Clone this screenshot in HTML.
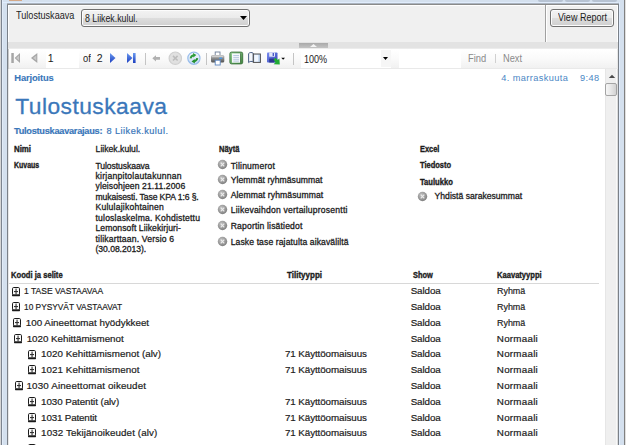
<!DOCTYPE html>
<html><head><meta charset="utf-8"><title>Tulostuskaava</title><style>
html,body{margin:0;padding:0;}
body{width:626px;height:445px;overflow:hidden;background:#d4e0ee;position:relative;font-family:"Liberation Sans",sans-serif;}
.a{position:absolute;display:block;}
.t{position:absolute;white-space:pre;color:#1c1c1c;font-family:"Liberation Sans",sans-serif;}
</style></head><body>
<div class="a" style="left:0px;top:0px;width:1px;height:445px;background:#d6d6d6"></div>
<div class="a" style="left:1px;top:0px;width:1px;height:445px;background:#7c8490"></div>
<div class="a" style="left:2px;top:0px;width:1px;height:445px;background:#e2ecf8"></div>
<div class="a" style="left:7px;top:4px;width:1px;height:441px;background:#7a8088"></div>
<div class="a" style="left:2px;top:2px;width:616px;height:1px;background:#e0ecfc"></div>
<div class="a" style="left:7px;top:3px;width:612px;height:1px;background:#aab3be"></div>
<div class="a" style="left:7px;top:4px;width:612px;height:1px;background:#8a8a8a"></div>
<div class="a" style="left:618px;top:4px;width:1px;height:441px;background:#7a8088"></div>
<div class="a" style="left:619px;top:2px;width:1px;height:443px;background:#e0ecfc"></div>
<div class="a" style="left:624px;top:0px;width:1px;height:445px;background:#808080"></div>
<div class="a" style="left:625px;top:0px;width:1px;height:445px;background:#e0e0e0"></div>
<div class="a" style="left:9px;top:0px;width:13px;height:1px;background:#d4a888"></div>
<div class="a" style="left:538px;top:0px;width:25px;height:2px;background:#b7c3d3;border-radius:0 0 3px 3px"></div>
<div class="a" style="left:565px;top:0px;width:25px;height:2px;background:#b7c3d3;border-radius:0 0 3px 3px"></div>
<div class="a" style="left:592px;top:0px;width:25px;height:2px;background:#b7c3d3;border-radius:0 0 3px 3px"></div>
<div class="a" style="left:8px;top:5px;width:610px;height:37px;background:#f0f0f0"></div>
<div class="a" style="left:8px;top:5px;width:610px;height:1px;background:#ffffff"></div>
<div class="a" style="left:8px;top:5px;width:1px;height:37px;background:#ffffff"></div>
<div class="a" style="left:617px;top:5px;width:1px;height:37px;background:#ffffff"></div>
<div class="a" style="left:545px;top:5px;width:1px;height:37px;background:#a0a0a0"></div>
<div class="a" style="left:546px;top:5px;width:1px;height:37px;background:#ffffff"></div>
<div class="a" style="left:81px;top:9px;width:169px;height:18px;box-sizing:border-box;border:1px solid #707070;border-radius:3px;background:linear-gradient(#f3f3f3,#ebebeb 48%,#dddddd 52%,#cfcfcf);box-shadow:inset 0 0 0 1px #fcfcfc"></div>
<svg class="a" style="left:240px;top:16px" width="7" height="4"><path d="M0 0H7L3.5 4Z" fill="#000"/></svg>
<div class="a" style="left:550px;top:9px;width:64px;height:18px;box-sizing:border-box;border:1px solid #707070;border-radius:3px;background:linear-gradient(#f3f3f3,#ebebeb 48%,#dddddd 52%,#cfcfcf);box-shadow:inset 0 0 0 1px #fcfcfc"></div>
<div class="a" style="left:8px;top:42px;width:610px;height:6px;background:#e3e3e3"></div>
<div class="a" style="left:8px;top:48px;width:610px;height:1px;background:#ececec"></div>
<div class="a" style="left:299px;top:43px;width:29px;height:5px;background:linear-gradient(#a9a9a9,#c4c4c4)"></div>
<svg class="a" style="left:310px;top:44px" width="7" height="3"><path d="M0 3H7L3.5 0Z" fill="#f4f4f4"/></svg>
<div class="a" style="left:8px;top:49px;width:610px;height:19px;background:linear-gradient(#ffffff,#fafafa 50%,#f1f1f1)"></div>
<div class="a" style="left:8px;top:68px;width:610px;height:1px;background:#e9e9e9"></div>
<div class="a" style="left:8px;top:49px;width:1px;height:20px;background:#c8c8c8"></div>
<div class="a" style="left:617px;top:49px;width:1px;height:20px;background:#e8e8e8"></div>
<div class="a" style="left:46px;top:50px;width:33px;height:18px;background:#ffffff"></div>
<div class="a" style="left:301px;top:50px;width:90px;height:18px;background:#ffffff"></div>
<div class="a" style="left:381px;top:50px;width:10px;height:17px;background:#f6f6f6"></div>
<svg class="a" style="left:383px;top:57px" width="5" height="3"><path d="M0 0H5L2.5 3Z" fill="#000"/></svg>
<div class="a" style="left:399px;top:50px;width:62px;height:18px;background:#ffffff"></div>
<div class="a" style="left:145px;top:53px;width:1px;height:12px;background:#c4c4c4"></div>
<div class="a" style="left:206px;top:53px;width:1px;height:12px;background:#c4c4c4"></div>
<div class="a" style="left:293px;top:53px;width:1px;height:12px;background:#c4c4c4"></div>
<div class="a" style="left:495px;top:54px;width:1px;height:9px;background:#d0d0d0"></div>
<svg class="a" style="left:9px;top:51px" width="30" height="14">
<rect x="2.3" y="2" width="2.5" height="10" fill="#a6a6a6"/>
<path d="M11 2V12L5.6 7Z" fill="#a6a6a6"/><path d="M10 4.5V9.5L7 7Z" fill="#c8c8c8"/>
<path d="M28.3 2V12L22 7Z" fill="#a6a6a6"/><path d="M27.3 4.5V9.5L24 7Z" fill="#c8c8c8"/>
</svg>
<svg class="a" style="left:108px;top:51px" width="30" height="14">
<defs><linearGradient id="bl" x1="0" y1="0" x2="0" y2="1"><stop offset="0" stop-color="#6a9af0"/><stop offset="1" stop-color="#1d3fc0"/></linearGradient></defs>
<path d="M2 2V12L7.5 7Z" fill="url(#bl)"/>
<path d="M19 2V12L24.5 7Z" fill="url(#bl)"/>
<rect x="25" y="2" width="2.6" height="10" fill="url(#bl)"/>
</svg>
<svg class="a" style="left:151px;top:54px" width="11" height="9">
<path d="M1.3 4.3L5 1.2V3H9V5.8H5V7.6Z" fill="#b0b0b0"/>
</svg>
<svg class="a" style="left:168px;top:51px" width="15" height="15">
<circle cx="7.3" cy="7.2" r="6.2" fill="#e0e0e0" stroke="#d0d0d0" stroke-width="1.2"/>
<path d="M5 4.9L9.6 9.5M9.6 4.9L5 9.5" stroke="#bcbcbc" stroke-width="1.5"/>
</svg>
<svg class="a" style="left:185px;top:50px" width="18" height="17">
<defs><linearGradient id="rf" x1="0" y1="0" x2="0" y2="1"><stop offset="0" stop-color="#f6f9fe"/><stop offset="1" stop-color="#c2d8f4"/></linearGradient></defs>
<circle cx="8.9" cy="8.2" r="6.1" fill="url(#rf)" stroke="#98bdec" stroke-width="1.2"/>
<path d="M5.6 8.3C5.9 6.6 7 5.5 8.8 5.2" stroke="#2c9c3a" stroke-width="1.9" fill="none"/>
<path d="M8 3L11.4 5.1L8.3 7.6Z" fill="#2c9c3a"/>
<path d="M12.3 8.2C12 9.9 10.9 11 9.1 11.3" stroke="#23902f" stroke-width="1.9" fill="none"/>
<path d="M9.9 13.5L6.5 11.4L9.6 8.9Z" fill="#23902f"/>
</svg>
<svg class="a" style="left:210px;top:51px" width="16" height="15">
<defs><linearGradient id="pr" x1="0" y1="0" x2="0" y2="1"><stop offset="0" stop-color="#c4c4c4"/><stop offset="0.45" stop-color="#8c8c8c"/><stop offset="1" stop-color="#505050"/></linearGradient></defs>
<rect x="5.2" y="1" width="4.8" height="4" fill="#fff" stroke="#6f7f98" stroke-width="0.9"/>
<rect x="1" y="4" width="13.3" height="7.6" rx="1.6" fill="url(#pr)"/>
<rect x="2" y="4.8" width="11.3" height="1.4" fill="#dcdcdc" opacity="0.7"/>
<rect x="9.3" y="6.6" width="2.8" height="1.4" fill="#4a9ae8"/>
<rect x="5.2" y="9.2" width="5" height="4.8" fill="#fff" stroke="#5c86c0" stroke-width="0.9"/>
</svg>
<svg class="a" style="left:229px;top:51px" width="15" height="14">
<defs><linearGradient id="pl" x1="0" y1="0" x2="1" y2="1"><stop offset="0" stop-color="#9ad49a"/><stop offset="1" stop-color="#3f8a3f"/></linearGradient></defs>
<rect x="0.9" y="1.1" width="12.8" height="11.8" rx="1.6" fill="url(#pl)" stroke="#3a6e3a" stroke-width="0.9"/>
<rect x="3" y="2.4" width="8.2" height="9.3" fill="#f6f8fc"/>
<rect x="11.2" y="2.4" width="0.9" height="9.3" fill="#2a4a2a" opacity="0.6"/>
<path d="M4.3 4.5H10M4.3 6.4H10M4.3 8.3H10M4.3 10.1H10" stroke="#a9bdd8" stroke-width="0.8"/>
</svg>
<svg class="a" style="left:247px;top:51px" width="15" height="13">
<defs><linearGradient id="ps" x1="0" y1="0" x2="1" y2="0"><stop offset="0" stop-color="#e8f0fc"/><stop offset="1" stop-color="#b8d0f0"/></linearGradient></defs>
<path d="M1.6 2.6C2.8 1.2 4.8 1.2 6.2 2.2V11C4.8 10 2.8 10.2 1.6 11.6Z" fill="#f4f6fa" stroke="#4a5f86" stroke-width="1"/>
<rect x="6.4" y="3" width="7" height="8.4" fill="url(#ps)" stroke="#505050" stroke-width="1"/>
<rect x="8" y="4" width="3.2" height="6.4" fill="#f2f7fe"/>
</svg>
<svg class="a" style="left:266px;top:51px" width="21" height="15">
<defs><linearGradient id="fl" x1="0" y1="0" x2="1" y2="1"><stop offset="0" stop-color="#7a8cf0"/><stop offset="1" stop-color="#3446b8"/></linearGradient></defs>
<rect x="1" y="1.5" width="10.5" height="10" rx="0.8" fill="url(#fl)"/>
<rect x="3.2" y="1.5" width="5.8" height="4.2" fill="#e4e8fa"/>
<rect x="6.6" y="2" width="1.4" height="3" fill="#4a5ac8"/>
<rect x="3.2" y="7.6" width="5.2" height="3.9" fill="#2c3890"/>
<path d="M7.6 8.6L9.6 6.8L11.6 9L13.4 7.4L13.8 13.6L7.6 13.2L9.4 11.4Z" fill="#22aa36"/>
<path d="M15.3 6.8H19L17.15 8.8Z" fill="#000"/>
</svg>
<div class="a" style="left:8px;top:69px;width:597px;height:376px;background:#ffffff"></div>
<div class="a" style="left:8px;top:69px;width:1px;height:376px;background:#e8e8e8"></div>
<div class="a" style="left:605px;top:69px;width:11px;height:376px;background:#efefef"></div>
<div class="a" style="left:605px;top:69px;width:1px;height:376px;background:#e6e6e6"></div>
<div class="a" style="left:616px;top:69px;width:1px;height:376px;background:#f8f8f8"></div>
<div class="a" style="left:617px;top:69px;width:1px;height:376px;background:#dcdcdc"></div>
<svg class="a" style="left:608px;top:74px" width="8" height="5"><path d="M0.8 4H7.2L4 0.8Z" fill="#4a4a4a"/></svg>
<div class="a" style="left:605px;top:83px;width:12px;height:13px;box-sizing:border-box;border:1px solid #a4a4a4;border-radius:2px;background:linear-gradient(90deg,#f6f6f6,#e8e8e8 45%,#d2d2d2)"></div>
<div class="a" style="left:9px;top:283px;width:590px;height:1px;background:#d8d8d8"></div>
<svg class="a" style="left:216.7px;top:159.0px" width="11" height="11">
<defs><radialGradient id="g222164" cx="0.4" cy="0.35" r="0.7"><stop offset="0" stop-color="#c4c4c4"/><stop offset="1" stop-color="#7c7c7c"/></radialGradient></defs>
<circle cx="5.5" cy="5.5" r="4.7" fill="url(#g222164)"/>
<path d="M3.7 3.7L7.3 7.3M7.3 3.7L3.7 7.3" stroke="#ececec" stroke-width="1.1"/>
</svg>
<svg class="a" style="left:216.7px;top:174.0px" width="11" height="11">
<defs><radialGradient id="g222179" cx="0.4" cy="0.35" r="0.7"><stop offset="0" stop-color="#c4c4c4"/><stop offset="1" stop-color="#7c7c7c"/></radialGradient></defs>
<circle cx="5.5" cy="5.5" r="4.7" fill="url(#g222179)"/>
<path d="M3.7 3.7L7.3 7.3M7.3 3.7L3.7 7.3" stroke="#ececec" stroke-width="1.1"/>
</svg>
<svg class="a" style="left:216.7px;top:189.1px" width="11" height="11">
<defs><radialGradient id="g222194" cx="0.4" cy="0.35" r="0.7"><stop offset="0" stop-color="#c4c4c4"/><stop offset="1" stop-color="#7c7c7c"/></radialGradient></defs>
<circle cx="5.5" cy="5.5" r="4.7" fill="url(#g222194)"/>
<path d="M3.7 3.7L7.3 7.3M7.3 3.7L3.7 7.3" stroke="#ececec" stroke-width="1.1"/>
</svg>
<svg class="a" style="left:216.7px;top:203.7px" width="11" height="11">
<defs><radialGradient id="g222209" cx="0.4" cy="0.35" r="0.7"><stop offset="0" stop-color="#c4c4c4"/><stop offset="1" stop-color="#7c7c7c"/></radialGradient></defs>
<circle cx="5.5" cy="5.5" r="4.7" fill="url(#g222209)"/>
<path d="M3.7 3.7L7.3 7.3M7.3 3.7L3.7 7.3" stroke="#ececec" stroke-width="1.1"/>
</svg>
<svg class="a" style="left:216.7px;top:219.7px" width="11" height="11">
<defs><radialGradient id="g222225" cx="0.4" cy="0.35" r="0.7"><stop offset="0" stop-color="#c4c4c4"/><stop offset="1" stop-color="#7c7c7c"/></radialGradient></defs>
<circle cx="5.5" cy="5.5" r="4.7" fill="url(#g222225)"/>
<path d="M3.7 3.7L7.3 7.3M7.3 3.7L3.7 7.3" stroke="#ececec" stroke-width="1.1"/>
</svg>
<svg class="a" style="left:216.7px;top:236.4px" width="11" height="11">
<defs><radialGradient id="g222241" cx="0.4" cy="0.35" r="0.7"><stop offset="0" stop-color="#c4c4c4"/><stop offset="1" stop-color="#7c7c7c"/></radialGradient></defs>
<circle cx="5.5" cy="5.5" r="4.7" fill="url(#g222241)"/>
<path d="M3.7 3.7L7.3 7.3M7.3 3.7L3.7 7.3" stroke="#ececec" stroke-width="1.1"/>
</svg>
<svg class="a" style="left:417.2px;top:190.5px" width="11" height="11">
<defs><radialGradient id="g422196" cx="0.4" cy="0.35" r="0.7"><stop offset="0" stop-color="#c4c4c4"/><stop offset="1" stop-color="#7c7c7c"/></radialGradient></defs>
<circle cx="5.5" cy="5.5" r="4.7" fill="url(#g422196)"/>
<path d="M3.7 3.7L7.3 7.3M7.3 3.7L3.7 7.3" stroke="#ececec" stroke-width="1.1"/>
</svg>
<svg class="a" style="left:12px;top:287px" width="8" height="10">
<rect x="0.5" y="0.5" width="7" height="7.6" rx="1.2" fill="#fafafa" stroke="#1a1a1a" stroke-width="1"/>
<rect x="0" y="7.6" width="8" height="1.6" rx="0.6" fill="#1a1a1a"/>
<rect x="3.5" y="1.6" width="1.1" height="6" fill="#333"/>
<rect x="2" y="4" width="4" height="1.1" fill="#333"/>
</svg>
<svg class="a" style="left:12px;top:302px" width="8" height="10">
<rect x="0.5" y="0.5" width="7" height="7.6" rx="1.2" fill="#fafafa" stroke="#1a1a1a" stroke-width="1"/>
<rect x="0" y="7.6" width="8" height="1.6" rx="0.6" fill="#1a1a1a"/>
<rect x="3.5" y="1.6" width="1.1" height="6" fill="#333"/>
<rect x="2" y="4" width="4" height="1.1" fill="#333"/>
</svg>
<svg class="a" style="left:13px;top:318px" width="8" height="10">
<rect x="0.5" y="0.5" width="7" height="7.6" rx="1.2" fill="#fafafa" stroke="#1a1a1a" stroke-width="1"/>
<rect x="0" y="7.6" width="8" height="1.6" rx="0.6" fill="#1a1a1a"/>
<rect x="3.5" y="1.6" width="1.1" height="6" fill="#333"/>
<rect x="2" y="4" width="4" height="1.1" fill="#333"/>
</svg>
<svg class="a" style="left:14px;top:334px" width="8" height="10">
<rect x="0.5" y="0.5" width="7" height="7.6" rx="1.2" fill="#fafafa" stroke="#1a1a1a" stroke-width="1"/>
<rect x="0" y="7.6" width="8" height="1.6" rx="0.6" fill="#1a1a1a"/>
<rect x="3.5" y="1.6" width="1.1" height="6" fill="#333"/>
<rect x="2" y="4" width="4" height="1.1" fill="#333"/>
</svg>
<svg class="a" style="left:28px;top:350px" width="8" height="10">
<rect x="0.5" y="0.5" width="7" height="7.6" rx="1.2" fill="#fafafa" stroke="#1a1a1a" stroke-width="1"/>
<rect x="0" y="7.6" width="8" height="1.6" rx="0.6" fill="#1a1a1a"/>
<rect x="3.5" y="1.6" width="1.1" height="6" fill="#333"/>
<rect x="2" y="4" width="4" height="1.1" fill="#333"/>
</svg>
<svg class="a" style="left:28px;top:365px" width="8" height="10">
<rect x="0.5" y="0.5" width="7" height="7.6" rx="1.2" fill="#fafafa" stroke="#1a1a1a" stroke-width="1"/>
<rect x="0" y="7.6" width="8" height="1.6" rx="0.6" fill="#1a1a1a"/>
<rect x="3.5" y="1.6" width="1.1" height="6" fill="#333"/>
<rect x="2" y="4" width="4" height="1.1" fill="#333"/>
</svg>
<svg class="a" style="left:15px;top:381px" width="8" height="10">
<rect x="0.5" y="0.5" width="7" height="7.6" rx="1.2" fill="#fafafa" stroke="#1a1a1a" stroke-width="1"/>
<rect x="0" y="7.6" width="8" height="1.6" rx="0.6" fill="#1a1a1a"/>
<rect x="3.5" y="1.6" width="1.1" height="6" fill="#333"/>
<rect x="2" y="4" width="4" height="1.1" fill="#333"/>
</svg>
<svg class="a" style="left:28px;top:397px" width="8" height="10">
<rect x="0.5" y="0.5" width="7" height="7.6" rx="1.2" fill="#fafafa" stroke="#1a1a1a" stroke-width="1"/>
<rect x="0" y="7.6" width="8" height="1.6" rx="0.6" fill="#1a1a1a"/>
<rect x="3.5" y="1.6" width="1.1" height="6" fill="#333"/>
<rect x="2" y="4" width="4" height="1.1" fill="#333"/>
</svg>
<svg class="a" style="left:28px;top:413px" width="8" height="10">
<rect x="0.5" y="0.5" width="7" height="7.6" rx="1.2" fill="#fafafa" stroke="#1a1a1a" stroke-width="1"/>
<rect x="0" y="7.6" width="8" height="1.6" rx="0.6" fill="#1a1a1a"/>
<rect x="3.5" y="1.6" width="1.1" height="6" fill="#333"/>
<rect x="2" y="4" width="4" height="1.1" fill="#333"/>
</svg>
<svg class="a" style="left:28px;top:428px" width="8" height="10">
<rect x="0.5" y="0.5" width="7" height="7.6" rx="1.2" fill="#fafafa" stroke="#1a1a1a" stroke-width="1"/>
<rect x="0" y="7.6" width="8" height="1.6" rx="0.6" fill="#1a1a1a"/>
<rect x="3.5" y="1.6" width="1.1" height="6" fill="#333"/>
<rect x="2" y="4" width="4" height="1.1" fill="#333"/>
</svg>
<svg class="a" style="left:28px;top:444px" width="8" height="10">
<rect x="0.5" y="0.5" width="7" height="7.6" rx="1.2" fill="#fafafa" stroke="#1a1a1a" stroke-width="1"/>
<rect x="0" y="7.6" width="8" height="1.6" rx="0.6" fill="#1a1a1a"/>
<rect x="3.5" y="1.6" width="1.1" height="6" fill="#333"/>
<rect x="2" y="4" width="4" height="1.1" fill="#333"/>
</svg>
<span class="t" style="left:16.3px;top:10px;font-size:10.5px;line-height:10.5px;transform:scaleX(0.8676);transform-origin:0 0;">Tulostuskaava</span>
<span class="t" style="left:84.6px;top:13px;font-size:10.5px;line-height:10.5px;transform:scaleX(0.8356);transform-origin:0 0;">8 Liikek.kulul.</span>
<span class="t" style="left:558px;top:12px;font-size:10.5px;line-height:10.5px;transform:scaleX(0.8597);transform-origin:0 0;">View Report</span>
<span class="t" style="left:47.8px;top:53px;font-size:10.5px;line-height:10.5px;">1</span>
<span class="t" style="left:82.8px;top:53px;font-size:10.5px;line-height:10.5px;transform:scaleX(0.8889);transform-origin:0 0;">of</span>
<span class="t" style="left:96.7px;top:53px;font-size:10.5px;line-height:10.5px;">2</span>
<span class="t" style="left:303.7px;top:54px;font-size:10.5px;line-height:10.5px;transform:scaleX(0.8626);transform-origin:0 0;">100%</span>
<span class="t" style="left:468px;top:53px;font-size:10.5px;line-height:10.5px;transform:scaleX(0.8909);transform-origin:0 0;color:#8a8a8a;">Find</span>
<span class="t" style="left:502.8px;top:53px;font-size:10.5px;line-height:10.5px;transform:scaleX(0.8819);transform-origin:0 0;color:#8a8a8a;">Next</span>
<span class="t" style="left:14.3px;top:73px;font-size:9.4px;line-height:9.4px;font-weight:700;letter-spacing:-0.15px;color:#3a77ba;-webkit-text-stroke:0.1px #3a77ba;">Harjoitus</span>
<span class="t" style="left:501.2px;top:74px;font-size:9.2px;line-height:9.2px;letter-spacing:0.415px;color:#4a86c4;">4. marraskuuta</span>
<span class="t" style="left:579.9px;top:74px;font-size:9.2px;line-height:9.2px;letter-spacing:0.467px;color:#4a86c4;">9:48</span>
<span class="t" style="left:15.2px;top:95px;font-size:22.8px;line-height:22.8px;letter-spacing:0.467px;color:#3a77ba;-webkit-text-stroke:0.3px #3a77ba;">Tulostuskaava</span>
<span class="t" style="left:14px;top:127px;font-size:9.2px;line-height:9.2px;font-weight:700;letter-spacing:-0.253px;color:#3a77ba;-webkit-text-stroke:0.2px #3a77ba;">Tulostuskaavarajaus:</span>
<span class="t" style="left:106.5px;top:127px;font-size:9.2px;line-height:9.2px;letter-spacing:0.45px;color:#3a77ba;-webkit-text-stroke:0.2px #3a77ba;">8 Liikek.kulul.</span>
<span class="t" style="left:14px;top:145px;font-size:8.6px;line-height:8.6px;font-weight:700;transform:scaleX(0.9159);transform-origin:0 0;-webkit-text-stroke:0.35px #1c1c1c;">Nimi</span>
<span class="t" style="left:14px;top:161px;font-size:8.6px;line-height:8.6px;font-weight:700;transform:scaleX(0.8131);transform-origin:0 0;-webkit-text-stroke:0.35px #1c1c1c;">Kuvaus</span>
<span class="t" style="left:95.6px;top:145px;font-size:8.6px;line-height:8.6px;letter-spacing:0.017px;-webkit-text-stroke:0.3px #1c1c1c;">Liikek.kulul.</span>
<span class="t" style="left:95.5px;top:162px;font-size:8.6px;line-height:8.6px;letter-spacing:-0.083px;-webkit-text-stroke:0.3px #1c1c1c;">Tulostuskaava</span>
<span class="t" style="left:95.5px;top:172px;font-size:8.6px;line-height:8.6px;letter-spacing:0.24px;-webkit-text-stroke:0.3px #1c1c1c;">kirjanpitolautakunnan</span>
<span class="t" style="left:95.5px;top:182px;font-size:8.6px;line-height:8.6px;letter-spacing:0.095px;-webkit-text-stroke:0.3px #1c1c1c;">yleisohjeen 21.11.2006</span>
<span class="t" style="left:95.5px;top:193px;font-size:8.6px;line-height:8.6px;letter-spacing:-0.096px;-webkit-text-stroke:0.3px #1c1c1c;">mukaisesti. Tase KPA 1:6 §.</span>
<span class="t" style="left:95.5px;top:203px;font-size:8.6px;line-height:8.6px;letter-spacing:0.212px;-webkit-text-stroke:0.3px #1c1c1c;">Kululajikohtainen</span>
<span class="t" style="left:95.5px;top:214px;font-size:8.6px;line-height:8.6px;letter-spacing:0.184px;-webkit-text-stroke:0.3px #1c1c1c;">tuloslaskelma. Kohdistettu</span>
<span class="t" style="left:95.5px;top:224px;font-size:8.6px;line-height:8.6px;letter-spacing:0.082px;-webkit-text-stroke:0.3px #1c1c1c;">Lemonsoft Liikekirjuri-</span>
<span class="t" style="left:95.5px;top:235px;font-size:8.6px;line-height:8.6px;letter-spacing:0.167px;-webkit-text-stroke:0.3px #1c1c1c;">tilikarttaan. Versio 6</span>
<span class="t" style="left:95.5px;top:245px;font-size:8.6px;line-height:8.6px;letter-spacing:-0.042px;-webkit-text-stroke:0.3px #1c1c1c;">(30.08.2013).</span>
<span class="t" style="left:218.7px;top:145px;font-size:8.6px;line-height:8.6px;font-weight:700;transform:scaleX(0.875);transform-origin:0 0;-webkit-text-stroke:0.35px #1c1c1c;">Näytä</span>
<span class="t" style="left:230.7px;top:162px;font-size:8.6px;line-height:8.6px;letter-spacing:0.2px;-webkit-text-stroke:0.3px #1c1c1c;">Tilinumerot</span>
<span class="t" style="left:230.7px;top:176px;font-size:8.6px;line-height:8.6px;letter-spacing:0.056px;-webkit-text-stroke:0.3px #1c1c1c;">Ylemmät ryhmäsummat</span>
<span class="t" style="left:230.7px;top:191px;font-size:8.6px;line-height:8.6px;letter-spacing:0.1px;-webkit-text-stroke:0.3px #1c1c1c;">Alemmat ryhmäsummat</span>
<span class="t" style="left:230.7px;top:206px;font-size:8.6px;line-height:8.6px;letter-spacing:0.203px;-webkit-text-stroke:0.3px #1c1c1c;">Liikevaihdon vertailuprosentti</span>
<span class="t" style="left:230.7px;top:222px;font-size:8.6px;line-height:8.6px;letter-spacing:0.161px;-webkit-text-stroke:0.3px #1c1c1c;">Raportin lisätiedot</span>
<span class="t" style="left:230.7px;top:238px;font-size:8.6px;line-height:8.6px;letter-spacing:0.103px;-webkit-text-stroke:0.3px #1c1c1c;">Laske tase rajatulta aikaväliltä</span>
<span class="t" style="left:420px;top:145px;font-size:8.6px;line-height:8.6px;font-weight:700;transform:scaleX(0.8636);transform-origin:0 0;-webkit-text-stroke:0.35px #1c1c1c;">Excel</span>
<span class="t" style="left:420px;top:161px;font-size:8.6px;line-height:8.6px;font-weight:700;transform:scaleX(0.8723);transform-origin:0 0;-webkit-text-stroke:0.35px #1c1c1c;">Tiedosto</span>
<span class="t" style="left:420px;top:178px;font-size:8.6px;line-height:8.6px;font-weight:700;transform:scaleX(0.8865);transform-origin:0 0;-webkit-text-stroke:0.35px #1c1c1c;">Taulukko</span>
<span class="t" style="left:434.6px;top:192px;font-size:8.6px;line-height:8.6px;letter-spacing:0.005px;-webkit-text-stroke:0.3px #1c1c1c;">Yhdistä sarakesummat</span>
<span class="t" style="left:10.9px;top:271px;font-size:8.6px;line-height:8.6px;font-weight:700;transform:scaleX(0.8864);transform-origin:0 0;-webkit-text-stroke:0.35px #1c1c1c;">Koodi ja selite</span>
<span class="t" style="left:287.2px;top:271px;font-size:8.6px;line-height:8.6px;font-weight:700;transform:scaleX(0.932);transform-origin:0 0;-webkit-text-stroke:0.35px #1c1c1c;">Tilityyppi</span>
<span class="t" style="left:413.3px;top:271px;font-size:8.6px;line-height:8.6px;font-weight:700;transform:scaleX(0.8609);transform-origin:0 0;-webkit-text-stroke:0.35px #1c1c1c;">Show</span>
<span class="t" style="left:496.7px;top:271px;font-size:8.6px;line-height:8.6px;font-weight:700;transform:scaleX(0.8825);transform-origin:0 0;-webkit-text-stroke:0.35px #1c1c1c;">Kaavatyyppi</span>
<span class="t" style="left:24.3px;top:286px;font-size:9.8px;line-height:9.8px;transform:scaleX(0.8703);transform-origin:0 0;-webkit-text-stroke:0.2px #1c1c1c;">1 TASE VASTAAVAA</span>
<span class="t" style="left:410.7px;top:286px;font-size:9.8px;line-height:9.8px;letter-spacing:-0.1px;-webkit-text-stroke:0.2px #1c1c1c;">Saldoa</span>
<span class="t" style="left:496.8px;top:286px;font-size:9.8px;line-height:9.8px;transform:scaleX(0.9099);transform-origin:0 0;-webkit-text-stroke:0.2px #1c1c1c;">Ryhmä</span>
<span class="t" style="left:24.3px;top:302px;font-size:9.8px;line-height:9.8px;transform:scaleX(0.85);transform-origin:0 0;-webkit-text-stroke:0.2px #1c1c1c;">10 PYSYVÄT VASTAAVAT</span>
<span class="t" style="left:410.7px;top:302px;font-size:9.8px;line-height:9.8px;letter-spacing:-0.1px;-webkit-text-stroke:0.2px #1c1c1c;">Saldoa</span>
<span class="t" style="left:496.8px;top:302px;font-size:9.8px;line-height:9.8px;transform:scaleX(0.9099);transform-origin:0 0;-webkit-text-stroke:0.2px #1c1c1c;">Ryhmä</span>
<span class="t" style="left:25.8px;top:318px;font-size:9.8px;line-height:9.8px;letter-spacing:0.008px;-webkit-text-stroke:0.2px #1c1c1c;">100 Aineettomat hyödykkeet</span>
<span class="t" style="left:410.7px;top:318px;font-size:9.8px;line-height:9.8px;letter-spacing:-0.1px;-webkit-text-stroke:0.2px #1c1c1c;">Saldoa</span>
<span class="t" style="left:496.8px;top:318px;font-size:9.8px;line-height:9.8px;transform:scaleX(0.9099);transform-origin:0 0;-webkit-text-stroke:0.2px #1c1c1c;">Ryhmä</span>
<span class="t" style="left:26.7px;top:334px;font-size:9.8px;line-height:9.8px;letter-spacing:-0.026px;-webkit-text-stroke:0.2px #1c1c1c;">1020 Kehittämismenot</span>
<span class="t" style="left:410.7px;top:334px;font-size:9.8px;line-height:9.8px;letter-spacing:-0.1px;-webkit-text-stroke:0.2px #1c1c1c;">Saldoa</span>
<span class="t" style="left:496.8px;top:334px;font-size:9.8px;line-height:9.8px;letter-spacing:0.257px;-webkit-text-stroke:0.2px #1c1c1c;">Normaali</span>
<span class="t" style="left:41.1px;top:349px;font-size:9.8px;line-height:9.8px;letter-spacing:0.028px;-webkit-text-stroke:0.2px #1c1c1c;">1020 Kehittämismenot (alv)</span>
<span class="t" style="left:285px;top:349px;font-size:9.8px;line-height:9.8px;letter-spacing:-0.087px;-webkit-text-stroke:0.2px #1c1c1c;">71 Käyttöomaisuus</span>
<span class="t" style="left:410.7px;top:349px;font-size:9.8px;line-height:9.8px;letter-spacing:-0.1px;-webkit-text-stroke:0.2px #1c1c1c;">Saldoa</span>
<span class="t" style="left:496.8px;top:349px;font-size:9.8px;line-height:9.8px;letter-spacing:0.257px;-webkit-text-stroke:0.2px #1c1c1c;">Normaali</span>
<span class="t" style="left:41.1px;top:365px;font-size:9.8px;line-height:9.8px;letter-spacing:0.047px;-webkit-text-stroke:0.2px #1c1c1c;">1021 Kehittämismenot</span>
<span class="t" style="left:285px;top:365px;font-size:9.8px;line-height:9.8px;letter-spacing:-0.087px;-webkit-text-stroke:0.2px #1c1c1c;">71 Käyttöomaisuus</span>
<span class="t" style="left:410.7px;top:365px;font-size:9.8px;line-height:9.8px;letter-spacing:-0.1px;-webkit-text-stroke:0.2px #1c1c1c;">Saldoa</span>
<span class="t" style="left:496.8px;top:365px;font-size:9.8px;line-height:9.8px;letter-spacing:0.257px;-webkit-text-stroke:0.2px #1c1c1c;">Normaali</span>
<span class="t" style="left:26.5px;top:381px;font-size:9.8px;line-height:9.8px;letter-spacing:0.146px;-webkit-text-stroke:0.2px #1c1c1c;">1030 Aineettomat oikeudet</span>
<span class="t" style="left:410.7px;top:381px;font-size:9.8px;line-height:9.8px;letter-spacing:-0.1px;-webkit-text-stroke:0.2px #1c1c1c;">Saldoa</span>
<span class="t" style="left:496.8px;top:381px;font-size:9.8px;line-height:9.8px;letter-spacing:0.257px;-webkit-text-stroke:0.2px #1c1c1c;">Normaali</span>
<span class="t" style="left:41.1px;top:397px;font-size:9.8px;line-height:9.8px;letter-spacing:-0.078px;-webkit-text-stroke:0.2px #1c1c1c;">1030 Patentit (alv)</span>
<span class="t" style="left:285px;top:397px;font-size:9.8px;line-height:9.8px;letter-spacing:-0.087px;-webkit-text-stroke:0.2px #1c1c1c;">71 Käyttöomaisuus</span>
<span class="t" style="left:410.7px;top:397px;font-size:9.8px;line-height:9.8px;letter-spacing:-0.1px;-webkit-text-stroke:0.2px #1c1c1c;">Saldoa</span>
<span class="t" style="left:496.8px;top:397px;font-size:9.8px;line-height:9.8px;letter-spacing:0.257px;-webkit-text-stroke:0.2px #1c1c1c;">Normaali</span>
<span class="t" style="left:41.1px;top:413px;font-size:9.8px;line-height:9.8px;letter-spacing:-0.158px;-webkit-text-stroke:0.2px #1c1c1c;">1031 Patentit</span>
<span class="t" style="left:285px;top:413px;font-size:9.8px;line-height:9.8px;letter-spacing:-0.087px;-webkit-text-stroke:0.2px #1c1c1c;">71 Käyttöomaisuus</span>
<span class="t" style="left:410.7px;top:413px;font-size:9.8px;line-height:9.8px;letter-spacing:-0.1px;-webkit-text-stroke:0.2px #1c1c1c;">Saldoa</span>
<span class="t" style="left:496.8px;top:413px;font-size:9.8px;line-height:9.8px;letter-spacing:0.257px;-webkit-text-stroke:0.2px #1c1c1c;">Normaali</span>
<span class="t" style="left:41.1px;top:428px;font-size:9.8px;line-height:9.8px;letter-spacing:0.1px;-webkit-text-stroke:0.2px #1c1c1c;">1032 Tekijänoikeudet (alv)</span>
<span class="t" style="left:285px;top:428px;font-size:9.8px;line-height:9.8px;letter-spacing:-0.087px;-webkit-text-stroke:0.2px #1c1c1c;">71 Käyttöomaisuus</span>
<span class="t" style="left:410.7px;top:428px;font-size:9.8px;line-height:9.8px;letter-spacing:-0.1px;-webkit-text-stroke:0.2px #1c1c1c;">Saldoa</span>
<span class="t" style="left:496.8px;top:428px;font-size:9.8px;line-height:9.8px;letter-spacing:0.257px;-webkit-text-stroke:0.2px #1c1c1c;">Normaali</span>
<span class="t" style="left:41.1px;top:444px;font-size:9.8px;line-height:9.8px;letter-spacing:0.311px;-webkit-text-stroke:0.2px #1c1c1c;">1033 Tekijänoikeudet</span>
<span class="t" style="left:285px;top:444px;font-size:9.8px;line-height:9.8px;letter-spacing:-0.087px;-webkit-text-stroke:0.2px #1c1c1c;">71 Käyttöomaisuus</span>
<span class="t" style="left:410.7px;top:444px;font-size:9.8px;line-height:9.8px;letter-spacing:-0.1px;-webkit-text-stroke:0.2px #1c1c1c;">Saldoa</span>
<span class="t" style="left:496.8px;top:444px;font-size:9.8px;line-height:9.8px;letter-spacing:0.257px;-webkit-text-stroke:0.2px #1c1c1c;">Normaali</span>
</body></html>
